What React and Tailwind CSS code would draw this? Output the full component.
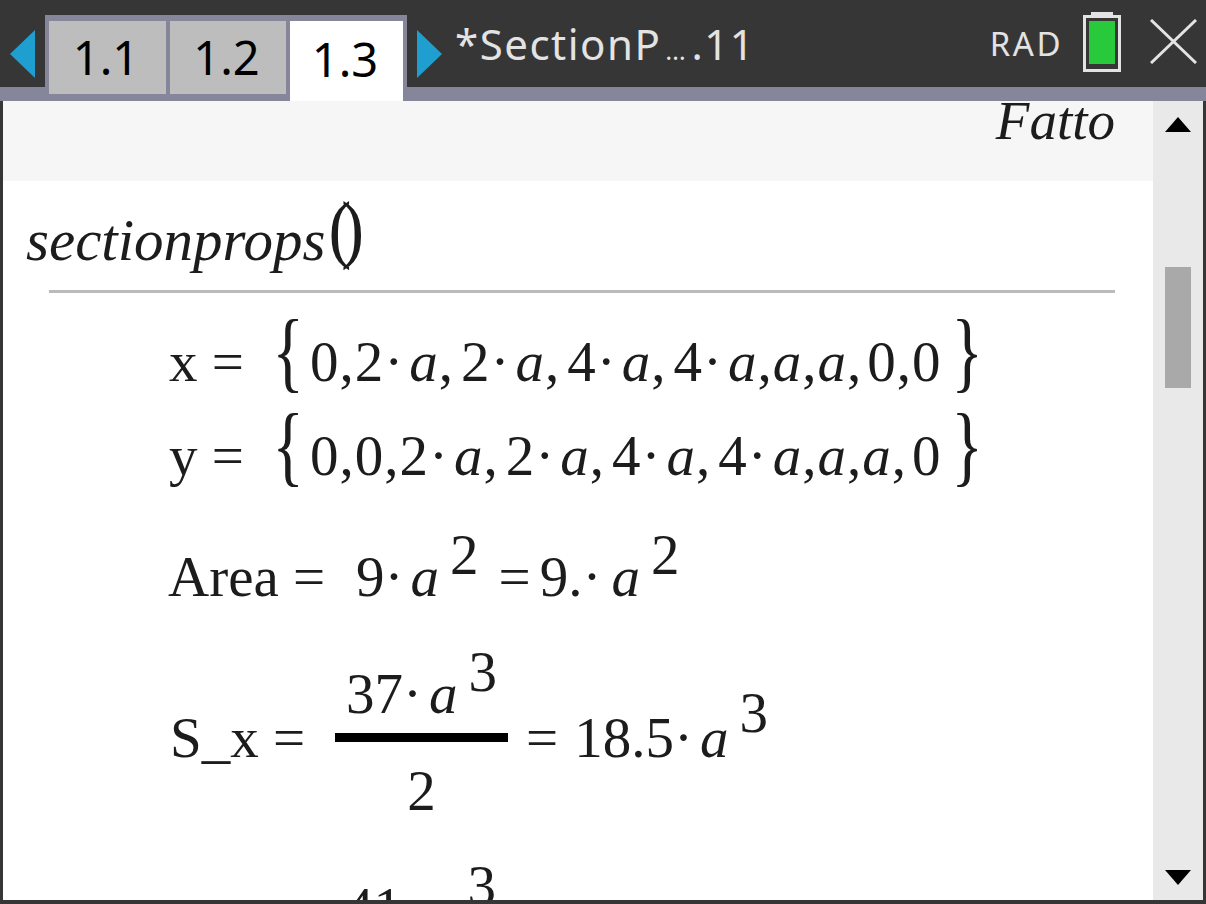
import React from "react";

const serif = "font-['Liberation_Serif',serif]";

function Sup({ children, lift = "-translate-y-[22px]" }) {
  return <span className={`inline-block ml-[4px] ${lift}`}>{children}</span>;
}

function A() {
  return <i className="mx-[7px]">a</i>;
}

function Brace({ children, className = "" }) {
  return (
    <span className={`w-[26px] flex justify-center text-[88px] leading-[60px] font-light scale-x-75 ${className}`}>
      {children}
    </span>
  );
}

// one "2· a," group of a list
function Term({ n, dot }) {
  return (
    <>
      {n}
      {dot}
      <i className="ml-[5px]">a</i>
      <span className="mr-[7px]">,</span>
    </>
  );
}

function ListRow({ name, children, height }) {
  return (
    <div className={`flex items-baseline pl-[166px] text-[57px] leading-none whitespace-pre ${height}`}>
      <span className="w-[106px]">{name} =</span>
      <Brace>{"{"}</Brace>
      <span className="ml-[9px] tracking-[1px]">{children}</span>
      <Brace className="ml-[13px]">{"}"}</Brace>
    </div>
  );
}

export default function App() {
  const dot = "\u00b7";
  return (
    <div className="w-[1206px] h-[904px] bg-[#363636] overflow-hidden flex flex-col">
      {/* top bar */}
      <div className="h-[87px] flex items-start shrink-0 text-[#e3e3e3] font-['Noto_Sans',sans-serif]">
        <svg className="w-[25px] h-[48px] ml-[10px] mt-[30px] mr-[10px] shrink-0" viewBox="0 0 25 48">
          <path d="M25 0V48L0 24Z" fill="#1f9fd0" />
        </svg>
        <div className="mt-[15px] h-[86px] w-[362px] flex gap-[4px] bg-[#858699] pt-[6px] px-[4px] relative z-10 text-[47px] text-black shrink-0">
          <div className="w-[117px] h-[73px] bg-[#bdbdbd] flex items-center justify-center pr-[3px]">1.1</div>
          <div className="w-[116px] h-[73px] bg-[#bdbdbd] flex items-center justify-center pr-[3px]">1.2</div>
          <div className="w-[113px] h-[80px] bg-white flex justify-center pt-[3px] pr-[3px]">1.3</div>
        </div>
        <svg className="w-[25px] h-[48px] ml-[10px] mt-[30px] shrink-0" viewBox="0 0 25 48">
          <path d="M0 0V48L25 24Z" fill="#1f9fd0" />
        </svg>
        <div className="ml-[13px] mt-[14px] text-[42px] leading-[60px] tracking-[1.5px] whitespace-pre">
          *SectionP<span className="text-[26px] mx-[4px]">…</span>.11
        </div>
        <div className="ml-auto mt-[22px] text-[33px] leading-[44px] tracking-[2.5px]">RAD</div>
        <div className="ml-[20px] mt-[12px] w-[38px] flex flex-col items-center shrink-0">
          <div className="w-[22px] h-[3px] bg-[#e3e3e3]" />
          <div className="w-[38px] h-[57px] border-[3px] border-[#e3e3e3] p-[3px] pb-[5px]">
            <div className="w-full h-full bg-[#28c93a]" />
          </div>
        </div>
        <svg className="w-[47px] h-[45px] ml-[29px] mr-[9px] mt-[19px] shrink-0" viewBox="0 0 47 45">
          <path d="M1 1L46 44M46 1L1 44" stroke="#e3e3e3" strokeWidth="3" />
        </svg>
      </div>
      <div className="h-[14px] bg-[#858699] shrink-0" />

      {/* document */}
      <div className="flex-1 min-h-0 flex pl-[3px] pr-[3px] pb-[4px]">
        <div className={`flex-1 min-w-0 bg-white overflow-hidden text-[#1c1c1c] ${serif}`}>
          <div className="h-[80px] bg-[#f6f6f6] flex justify-end pr-[38px] italic text-[55px] leading-[40px]">
            Fatto
          </div>
          <div className="h-[109px] pl-[23px] pt-[24px] italic text-[59px] leading-[70px] flex whitespace-pre">
            sectionprops
            <span className="not-italic ml-[2px] -mt-[10px] text-[76px] leading-[66px] font-light tracking-[-11px] scale-x-90">()</span>
          </div>
          <div className="h-[3px] bg-[#bbbbbb] ml-[46px] mr-[38px]" />

          <div className="pt-[29px]">
            <ListRow name="x" height="h-[94px]">
              0,<Term n="2" dot={dot} /><Term n="2" dot={dot} /><Term n="4" dot={dot} />4{dot}
              <i className="ml-[5px]">a</i>,<i>a</i>,<i>a</i>,<span className="ml-[5px]">0,0</span>
            </ListRow>
            <ListRow name="y" height="h-[94px]">
              0,0,<Term n="2" dot={dot} /><Term n="2" dot={dot} /><Term n="4" dot={dot} />4{dot}
              <i className="ml-[5px]">a</i>,<i>a</i>,<i>a</i>,<span className="ml-[5px]">0</span>
            </ListRow>
          </div>

          <div className="pl-[165px] h-[155px] pt-[38px] text-[57px] leading-none whitespace-pre flex items-baseline">
            <span className="w-[188px]">Area =</span>
            <span>9{dot}<A /><Sup>2</Sup></span>
            <span className="ml-[20px] mr-[9px]">=</span>
            <span>9.{dot}<span className="ml-[3px]"><A /></span><Sup>2</Sup></span>
          </div>

          <div className="pl-[167px] flex items-center text-[57px] leading-none whitespace-pre">
            <span className="w-[165px]">S_x =</span>
            <div className="flex flex-col items-center w-[173px]">
              <div className="h-[68px]">37{dot}<A /><Sup>3</Sup></div>
              <div className="h-[9px] w-full bg-black" />
              <div className="mt-[20px] h-[48px]">2</div>
            </div>
            <span className="ml-[18px]">=</span>
            <span className="ml-[16px]">18.5{dot}<A /><Sup lift="-translate-y-[25px]">3</Sup></span>
          </div>

          <div className="pl-[342px] pt-[69px] text-[57px] leading-none whitespace-pre">
            41{dot}<A /><Sup>3</Sup>
          </div>
        </div>

        {/* scrollbar */}
        <div className="w-[50px] shrink-0 bg-[#e8e9e8] flex flex-col items-center pt-[16px]">
          <svg className="w-[26px] h-[15px]" viewBox="0 0 26 15">
            <path d="M13 0L26 15H0Z" fill="#000" />
          </svg>
          <div className="w-[26px] h-[121px] bg-[#a9a9a9] mt-[135px]" />
          <svg className="w-[26px] h-[15px] mt-auto mb-[15px]" viewBox="0 0 26 15">
            <path d="M0 0H26L13 15Z" fill="#000" />
          </svg>
        </div>
      </div>
    </div>
  );
}
